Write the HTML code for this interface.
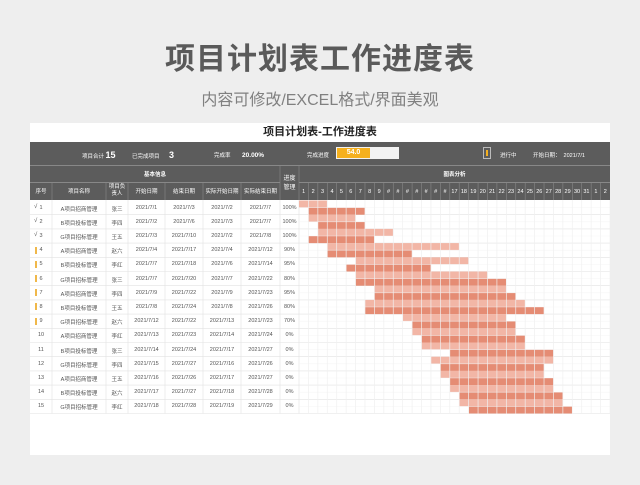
<!DOCTYPE html><html><head><meta charset="utf-8"><style>
body{margin:0;width:640px;height:485px;background:#eeeeee;font-family:"Liberation Sans","Noto Sans CJK SC",sans-serif;position:relative;overflow:hidden}
.a{position:absolute}
.h1{left:0;width:640px;top:34px;text-align:center;font-size:30px;color:#5a5a5a;font-weight:bold;letter-spacing:1px}
.h2{left:0;width:640px;top:86px;text-align:center;font-size:16px;color:#808080}
.card{left:30px;top:123px;width:580px;height:332px;background:#fff}
.t{font-size:5.5px;color:#fff;white-space:nowrap}
.c{text-align:center;font-size:5.5px;color:#555;white-space:nowrap}
</style></head><body>
<div class="a h1">项目计划表工作进度表</div>
<div class="a h2">内容可修改/EXCEL格式/界面美观</div>
<div class="a card"></div>
<div class="a" style="left:30px;width:580px;top:123px;text-align:center;font-size:11px;font-weight:bold;color:#222">项目计划表-工作进度表</div>
<div class="a" style="left:30px;top:142px;width:580px;height:58px;background:#5c5c5c"></div>
<div class="a" style="left:30px;top:165px;width:580px;height:1px;background:#888"></div>
<div class="a" style="left:30px;top:182px;width:250px;height:1px;background:#888"></div>
<div class="a" style="left:299px;top:182px;width:311px;height:1px;background:#888"></div>
<div class="a t" style="left:82px;top:150px">项目合计 <b style="font-size:9px">15</b></div>
<div class="a t" style="left:132px;top:150px">已完成项目 <b style="font-size:9px;margin-left:8px">3</b></div>
<div class="a t" style="left:214px;top:151px">完成率 <b style="margin-left:10px;font-size:6.5px">20.00%</b></div>
<div class="a t" style="left:307px;top:151px">完成进度</div>
<div class="a" style="left:336px;top:147px;width:63px;height:12px;background:#f2f2f2"></div>
<div class="a" style="left:337px;top:148px;width:33px;height:10px;background:#f5b01e;color:#fff;font-size:7px;font-weight:bold;text-align:center;line-height:10px">54.0</div>
<div class="a" style="left:483px;top:147px;width:8px;height:12px;border:1px solid #bbb;box-sizing:border-box"></div>
<div class="a" style="left:486px;top:150px;width:1.5px;height:6px;background:#f5b01e"></div>
<div class="a t" style="left:500px;top:151px">进行中</div>
<div class="a t" style="left:533px;top:151px">开始日期：&nbsp; 2021/7/1</div>
<div class="a t" style="left:30px;width:250px;top:170px;text-align:center;font-weight:bold">基本信息</div>
<div class="a t" style="left:299px;width:311px;top:170px;text-align:center;font-weight:bold">图表分析</div>
<div class="a t" style="left:280px;width:19px;top:175px;text-align:center;line-height:9px;font-size:6px">进度<br>管理</div>
<svg class="a" style="left:0;top:0" width="640" height="485">
<g stroke="#888" stroke-width="0.6">
<line x1="280" y1="165" x2="280" y2="200"/><line x1="299" y1="165" x2="299" y2="200"/>
<line x1="52" y1="183" x2="52" y2="200"/><line x1="106" y1="183" x2="106" y2="200"/><line x1="128" y1="183" x2="128" y2="200"/><line x1="165" y1="183" x2="165" y2="200"/><line x1="203" y1="183" x2="203" y2="200"/><line x1="241" y1="183" x2="241" y2="200"/>
</g>
<g id="grid"></g><g id="bars"></g><g id="gl"></g>
</svg>
<div id="hd"></div><div id="rows"></div>
<script>
var L=299,W=311/33,T=200.5,H=14.2;
var s='';
var heads=[['序号',30,22],['项目名称',52,54],['项目负<br>责人',106,22],['开始日期',128,37],['结束日期',165,38],['实际开始日期',203,38],['实际结束日期',241,39]];
heads.forEach(function(h){s+='<div class="a t" style="left:'+h[1]+'px;width:'+h[2]+'px;top:'+(h[0].indexOf('<br>')>0?184:189)+'px;text-align:center;line-height:7px">'+h[0]+'</div>';});
for(var i=0;i<33;i++){var d=i<31?i+1:i-30;var lab=(d>=10&&d<=16)?'#':d;s+='<div class="a t" style="left:'+(L+i*W)+'px;width:'+W+'px;top:189px;text-align:center">'+lab+'</div>';}
document.getElementById('hd').innerHTML=s;
var nm=['A项目招商管理','B项目投标管理','G项目招标管理'],pp=['张三','李四','王五','赵六','李红'];
var D=[[1,3,2,7,'100%'],[2,6,3,7,'100%'],[3,10,2,8,'100%'],[4,17,4,12,'90%'],[7,18,6,14,'95%'],[7,20,7,22,'80%'],[9,22,9,23,'95%'],[8,24,8,26,'80%'],[12,22,13,23,'70%'],[13,23,14,24,'0%'],[14,24,17,27,'0%'],[15,27,16,26,'0%'],[16,26,17,27,'0%'],[17,27,18,28,'0%'],[18,28,19,29,'0%']];
var r='',b='',g='',gl='';
D.forEach(function(x,i){var y=T+i*H;var tp=y+4;
var cols=[[i+1,30,22],[nm[i%3],52,54],[pp[i%5],106,22],['2021/7/'+x[0],128,37],['2021/7/'+x[1],165,38],['2021/7/'+x[2],203,38],['2021/7/'+x[3],241,39],[x[4],280,19]];
cols.forEach(function(c){r+='<div class="a c" style="left:'+c[1]+'px;width:'+c[2]+'px;top:'+tp+'px">'+c[0]+'</div>';});
if(i<3)r+='<div class="a" style="left:34px;top:'+(tp-1)+'px;font-size:6px;color:#555">√</div>';
else if(i<9)r+='<div class="a" style="left:35px;top:'+(y+3.5)+'px;width:2px;height:7px;background:#f0b84a"></div>';
var dx=function(d){return L+(d-1)*W};
b+='<rect x="'+dx(x[0])+'" y="'+y+'" width="'+((x[1]-x[0]+1)*W)+'" height="'+(H/2)+'" fill="#f2b6a6"/>';
b+='<rect x="'+dx(x[2])+'" y="'+(y+H/2)+'" width="'+((x[3]-x[2]+1)*W)+'" height="'+(H/2)+'" fill="#e58c74"/>';
g+='<line x1="30" x2="610" y1="'+(y+H)+'" y2="'+(y+H)+'" stroke="#e2e2e2" stroke-width="0.6"/>';
gl+='<line x1="299" x2="610" y1="'+(y+H/2)+'" y2="'+(y+H/2)+'" stroke="#f3f3f3" stroke-width="0.6" opacity="0.8"/>';
});
[52,106,128,165,203,241,280,299].forEach(function(x){g+='<line x1="'+x+'" x2="'+x+'" y1="200" y2="'+(T+15*H)+'" stroke="#e2e2e2" stroke-width="0.6"/>';});
for(var i=1;i<=33;i++){var x=L+i*W;gl+='<line x1="'+x+'" x2="'+x+'" y1="200" y2="'+(T+15*H)+'" stroke="#f0f0f0" stroke-width="0.7"/>';}
for(var i=1;i<33;i++){var x=L+i*W;g+='<line x1="'+x+'" x2="'+x+'" y1="183" y2="200" stroke="#888" stroke-width="0.6"/>';}
document.getElementById('rows').innerHTML=r;
document.getElementById('grid').innerHTML=g;
document.getElementById('bars').innerHTML=b;
document.getElementById('gl').innerHTML=gl;
</script>
</body></html>
